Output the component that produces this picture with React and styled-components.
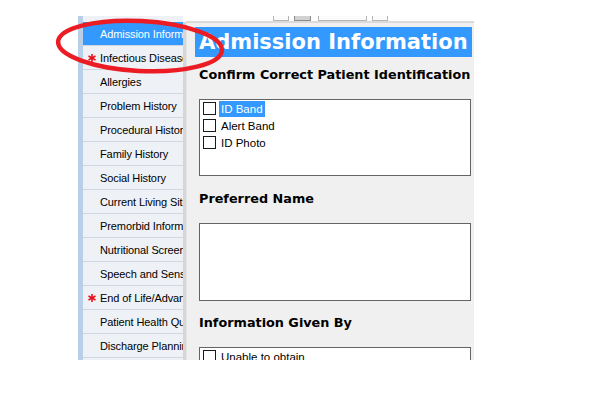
import React from "react";
import styled, { createGlobalStyle } from "styled-components";

const Global = createGlobalStyle`
  html, body { margin: 0; padding: 0; background: #fff; }
  body { width: 600px; height: 406px; overflow: hidden; font-family: "Liberation Sans", Arial, sans-serif; }
`;

const Page = styled.div`
  position: relative;
  width: 600px;
  height: 406px;
  background: #fff;
`;

const Frame = styled.div`
  display: flex;
  margin-left: 78px;
  width: 396px;
  height: 360px;
`;

const Sidebar = styled.div`
  width: 100px;
  margin-top: 16px;
  padding-top: 6px;
  border-left: 5px solid #b9cfe9;
  background: #eef1f6;
  display: flex;
  flex-direction: column;
`;

const NavItem = styled.div`
  position: relative;
  height: 23px;
  border-bottom: 1px solid #d2d6dd;
  display: flex;
  align-items: center;
  padding-left: 17px;
  font-size: 11px;
  letter-spacing: -0.1px;
  white-space: nowrap;
  overflow: hidden;
  background: ${(p) => (p.$active ? "#3399ff" : "#eef1f6")};
  color: ${(p) => (p.$active ? "#fff" : "#000")};
`;

const Star = styled.svg`
  position: absolute;
  left: 5px;
  top: 8px;
`;

const Splitter = styled.div`
  width: 3px;
  margin-top: 22px;
  background: #d6d6d6;
`;

const Main = styled.div`
  flex: 1;
  display: flex;
  flex-direction: column;
`;

const Toolbar = styled.div`
  height: 21px;
  border-bottom: 2px solid #dadada;
  display: flex;
  align-items: flex-end;
  padding-left: 87px;
  gap: 5px;
  box-sizing: content-box;
`;

const ToolButton = styled.div`
  width: ${(p) => p.$w}px;
  height: 4px;
  margin-right: ${(p) => p.$mr || 0}px;
  border: 1px solid ${(p) => (p.$pressed ? "#8a8a8a" : "#b4b4b4")};
  border-top: none;
  background: ${(p) => (p.$pressed ? "#d2d2d2" : "#fbfbfb")};
`;

const Content = styled.div`
  flex: 1;
  background: #f0f0f0;
  padding: 4px 2px 0 8px;
  overflow: hidden;
  border-left: 1px solid #e4e4e4;
`;

const Header = styled.div`
  height: 30px;
  line-height: 30px;
  background: #3399ff;
  color: #fff;
  font-family: "DejaVu Sans", Verdana, sans-serif;
  font-weight: bold;
  font-size: 21px;
  padding-left: 4px;
  white-space: nowrap;
  overflow: hidden;
`;

const SectionTitle = styled.div`
  margin: ${(p) => p.$mt}px 0 0 4px;
  height: 16px;
  line-height: 16px;
  font-family: "DejaVu Sans", Verdana, sans-serif;
  font-weight: bold;
  font-size: 12.8px;
  color: #000;
  white-space: nowrap;
`;

const Box = styled.div`
  margin: 16px 0 0 4px;
  width: 264px;
  height: ${(p) => p.$h}px;
  border: 1px solid #646464;
  background: #fff;
  padding: 0 3px;
  box-sizing: content-box;
`;

const CheckRow = styled.div`
  height: 17px;
  display: flex;
  align-items: center;
  font-size: 11.5px;
  color: #000;
`;

const Check = styled.span`
  width: 11px;
  height: 11px;
  border: 1px solid #1a1a1a;
  background: #fff;
  margin-right: 3px;
  flex: none;
`;

const Label = styled.span`
  padding: 0 2px;
  line-height: 16px;
  background: ${(p) => (p.$sel ? "#3399ff" : "transparent")};
  color: ${(p) => (p.$sel ? "#fff" : "#000")};
`;

const Annotation = styled.svg`
  position: absolute;
  left: 0;
  top: 0;
  pointer-events: none;
`;

const items = [
  { t: "Admission Information", active: true },
  { t: "Infectious Disease", star: true },
  { t: "Allergies" },
  { t: "Problem History" },
  { t: "Procedural History" },
  { t: "Family History" },
  { t: "Social History" },
  { t: "Current Living Situation" },
  { t: "Premorbid Information" },
  { t: "Nutritional Screening" },
  { t: "Speech and Sensory" },
  { t: "End of Life/Advance Directives", star: true },
  { t: "Patient Health Questionnaire" },
  { t: "Discharge Planning" },
];

const RedStar = () => (
  <Star width="8" height="8" viewBox="0 0 8 8">
    <g stroke="#e8101c" strokeWidth="1.6">
      <line x1="4" y1="0" x2="4" y2="8" />
      <line x1="0.5" y1="2" x2="7.5" y2="6" />
      <line x1="0.5" y1="6" x2="7.5" y2="2" />
    </g>
  </Star>
);

export default function App() {
  return (
    <Page>
      <Global />
      <Frame>
        <Sidebar>
          {items.map((it) => (
            <NavItem key={it.t} $active={it.active}>
              {it.star && <RedStar />}
              {it.t}
            </NavItem>
          ))}
        </Sidebar>
        <Splitter />
        <Main>
          <Toolbar>
            <ToolButton $w={14} />
            <ToolButton $w={15} $pressed $mr={2} />
            <ToolButton $w={47} />
            <ToolButton $w={14} />
          </Toolbar>
          <Content>
            <Header>Admission Information</Header>
            <SectionTitle $mt={10}>Confirm Correct Patient Identification</SectionTitle>
            <Box $h={75}>
              <CheckRow>
                <Check />
                <Label $sel>ID Band</Label>
              </CheckRow>
              <CheckRow>
                <Check />
                <Label>Alert Band</Label>
              </CheckRow>
              <CheckRow>
                <Check />
                <Label>ID Photo</Label>
              </CheckRow>
            </Box>
            <SectionTitle $mt={15}>Preferred Name</SectionTitle>
            <Box $h={76} />
            <SectionTitle $mt={14}>Information Given By</SectionTitle>
            <Box $h={40}>
              <CheckRow>
                <Check />
                <Label>Unable to obtain</Label>
              </CheckRow>
            </Box>
          </Content>
        </Main>
      </Frame>
      <Annotation width="600" height="406" viewBox="0 0 600 406">
        <ellipse
          cx="140"
          cy="46"
          rx="82"
          ry="25"
          fill="none"
          stroke="#ec1c24"
          strokeWidth="4.5"
          transform="rotate(3 140 46)"
        />
      </Annotation>
    </Page>
  );
}
